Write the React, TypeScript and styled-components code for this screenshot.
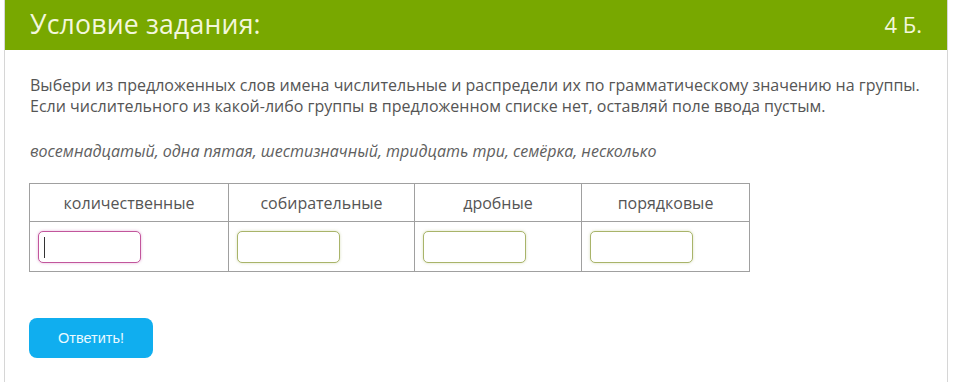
import React from "react";
import styled, { createGlobalStyle } from "styled-components";

const Global = createGlobalStyle`
  html, body { margin: 0; padding: 0; background: #ffffff; }
  body { font-family: "Open Sans", "Noto Sans", sans-serif; }
`;

const Card = styled.div`
  margin: 0 6px 0 4px;
  border-left: 1px solid #d6d6d6;
  border-right: 1px solid #d6d6d6;
  min-height: 382px;
  box-sizing: border-box;
`;

const Header = styled.div`
  height: 50px;
  background: #78a800;
  display: flex;
  align-items: center;
  justify-content: space-between;
  padding: 0 25px 2px 25px;
  box-sizing: border-box;
  color: #f3f7dc;
`;

const Title = styled.h2`
  margin: 0;
  font-size: 26.6px;
  font-weight: 400;
  letter-spacing: 0.2px;
`;

const Points = styled.span`
  font-size: 22px;
  font-weight: 400;
`;

const Body = styled.div`
  padding: 25px 24px 0 24px;
`;

const Instructions = styled.p`
  margin: 0 0 0 1px;
  font-size: 16px;
  line-height: 21px;
  color: #555555;
`;

const Words = styled.p`
  margin: 24px 0 0 1px;
  font-size: 16px;
  line-height: 21px;
  font-style: italic;
  color: #606060;
`;

const Table = styled.table`
  margin-top: 21px;
  border-collapse: collapse;
  font-size: 16px;
  color: #555555;
`;

const Th = styled.th<{ $w: number }>`
  width: ${(p) => p.$w}px;
  height: 38px;
  border: 1px solid #a0a0a0;
  font-weight: 400;
  text-align: center;
  padding: 0;
  box-sizing: border-box;
`;

const Td = styled.td`
  height: 49px;
  border: 1px solid #a0a0a0;
  padding: 0 0 0 8px;
  vertical-align: middle;
`;

const Field = styled.div<{ $focus?: boolean }>`
  width: 103px;
  height: 32px;
  box-sizing: border-box;
  border-radius: 5px;
  border: 1px solid ${(p) => (p.$focus ? "#c2569c" : "#a9b46a")};
  box-shadow: 0 0 3px ${(p) => (p.$focus ? "rgba(200, 90, 170, 0.45)" : "rgba(170, 185, 110, 0.45)")};
  background: #fff;
  position: relative;
`;

const Caret = styled.span`
  position: absolute;
  left: 5px;
  top: 5px;
  width: 1px;
  height: 21px;
  background: #333;
`;

const Button = styled.button`
  margin-top: 46px;
  width: 124px;
  height: 40px;
  border: none;
  border-radius: 8px;
  background: #10aeef;
  color: #eafaff;
  font-family: "Liberation Sans", Arial, sans-serif;
  font-size: 14.5px;
  cursor: pointer;
  padding: 0;
`;

const columns = [
  { name: "количественные", w: 199 },
  { name: "собирательные", w: 186 },
  { name: "дробные", w: 167 },
  { name: "порядковые", w: 168 },
];

export default function App() {
  return (
    <>
      <Global />
      <Card>
        <Header>
          <Title>Условие задания:</Title>
          <Points>4 Б.</Points>
        </Header>
        <Body>
          <Instructions>
            Выбери из предложенных слов имена числительные и распредели их по грамматическому значению на группы.
            <br />
            Если числительного из какой-либо группы в предложенном списке нет, оставляй поле ввода пустым.
          </Instructions>
          <Words>восемнадцатый, одна пятая, шестизначный, тридцать три, семёрка, несколько</Words>
          <Table>
            <thead>
              <tr>
                {columns.map((c) => (
                  <Th key={c.name} $w={c.w}>
                    {c.name}
                  </Th>
                ))}
              </tr>
            </thead>
            <tbody>
              <tr>
                {columns.map((c, i) => (
                  <Td key={c.name}>
                    <Field $focus={i === 0}>{i === 0 && <Caret />}</Field>
                  </Td>
                ))}
              </tr>
            </tbody>
          </Table>
          <Button>Ответить!</Button>
        </Body>
      </Card>
    </>
  );
}
